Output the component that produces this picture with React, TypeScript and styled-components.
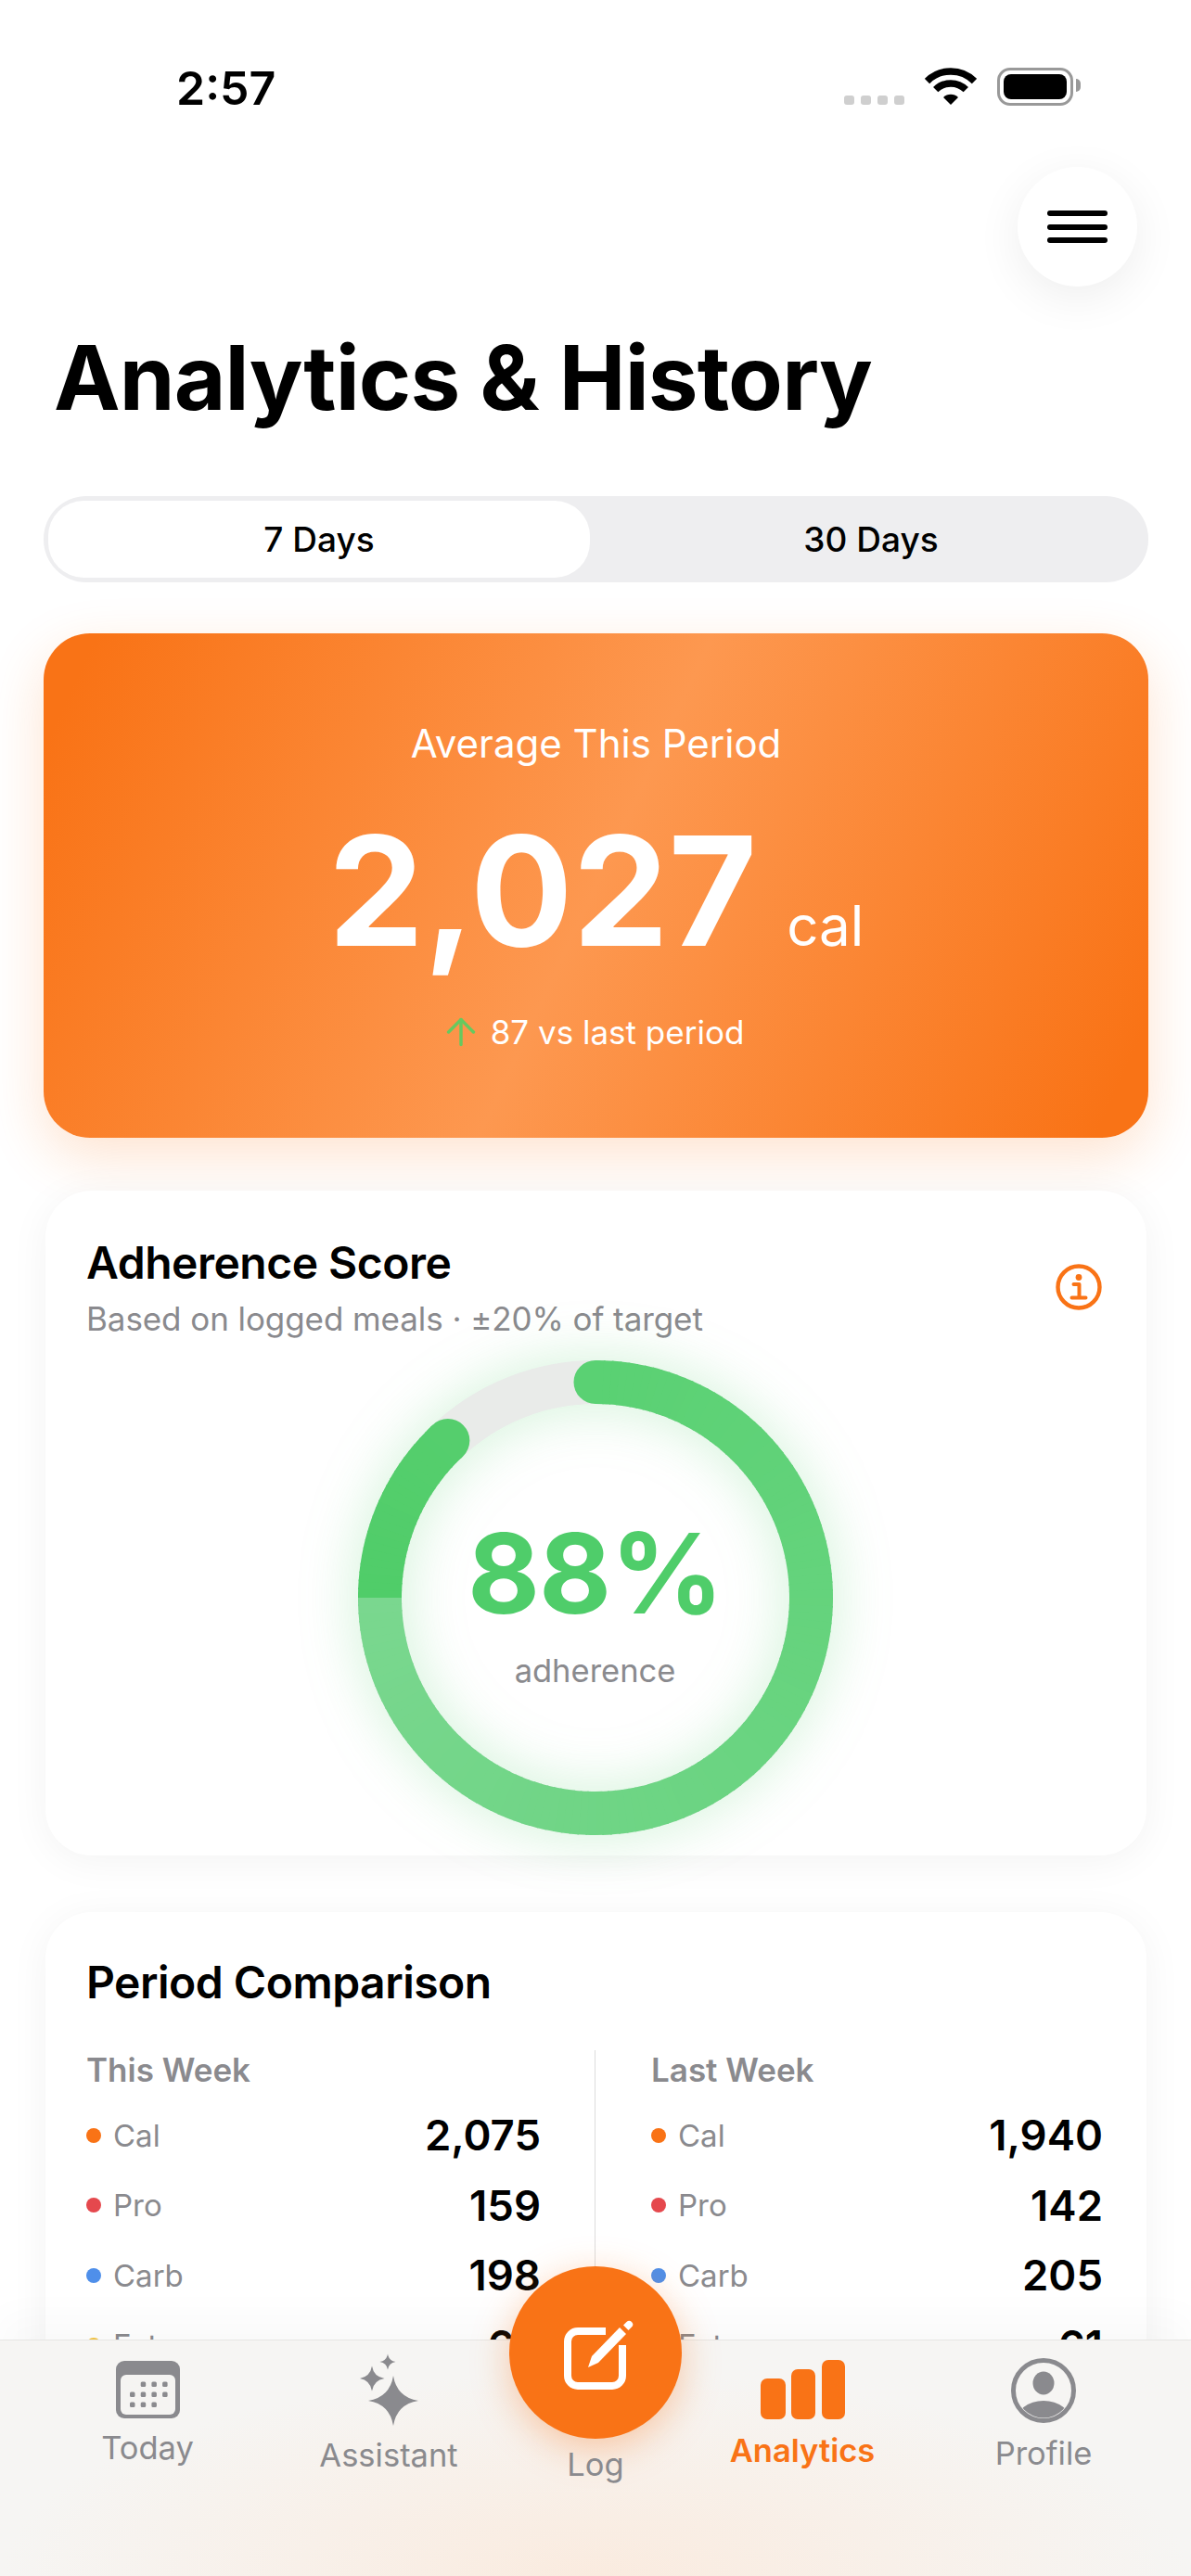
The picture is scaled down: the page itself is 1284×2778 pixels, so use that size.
import React, { FC } from "react";
import styled, { createGlobalStyle } from "styled-components";
import { ArrowUp } from "lucide-react";

const GlobalStyle = createGlobalStyle`
  html, body {
    margin: 0;
    padding: 0;
    background: #fff;
  }
  * {
    box-sizing: border-box;
  }
  body {
    font-family: Inter, "Liberation Sans", sans-serif;
    color: #000;
  }
`;

const ORANGE = "#f97316";
const GREY = "#8a8a8e";

const Page = styled.div`
  position: relative;
  width: 1284px;
  height: 2778px;
  overflow: hidden;
  background: #fff;
`;

const StatusBar = styled.div`
  display: flex;
  justify-content: space-between;
  align-items: flex-start;
  height: 180px;
  padding: 65px 127px 0 190px;
`;

const Time = styled.div`
  font-size: 50px;
  line-height: 60px;
  font-weight: 600;
`;

const StatusIcons = styled.div`
  display: flex;
  align-items: flex-start;
  padding-top: 8px;
`;

const SignalDots = styled.div`
  display: flex;
  gap: 7px;
  margin: 30px 22px 0 0;
`;

const SignalDot = styled.span`
  width: 11px;
  height: 10px;
  border-radius: 3px;
  background: #cfcfcf;
`;

const Battery = styled.div`
  position: relative;
  width: 82px;
  height: 41px;
  margin-left: 22px;
  padding: 4px;
  border: 3px solid #999;
  border-radius: 14px;

  &::before {
    content: "";
    display: block;
    height: 100%;
    border-radius: 8px;
    background: #000;
  }

  &::after {
    content: "";
    position: absolute;
    top: 9px;
    right: -11px;
    width: 5px;
    height: 14px;
    border-radius: 0 5px 5px 0;
    background: #999;
  }
`;

const Content = styled.div`
  padding: 0 46px 0 47px;
`;

const MenuRow = styled.div`
  display: flex;
  justify-content: flex-end;
  padding-right: 12px;
`;

const MenuButton = styled.div`
  display: flex;
  flex-direction: column;
  justify-content: center;
  align-items: center;
  gap: 8.5px;
  width: 129px;
  height: 129px;
  border-radius: 50%;
  background: #fff;
  box-shadow: 0 12px 50px rgba(0, 0, 0, 0.07);
`;

const MenuLine = styled.span`
  width: 65px;
  height: 6px;
  border-radius: 3px;
  background: #000;
`;

const Title = styled.h1`
  height: 186px;
  margin: 40px 0 0 11px;
  font-size: 96px;
  line-height: 116px;
  font-weight: 700;
  letter-spacing: -0.85px;
  white-space: nowrap;
`;

const Segmented = styled.div`
  display: grid;
  grid-template-columns: 584px 1fr;
  height: 93px;
  padding: 5px;
  border-radius: 46px;
  background: #eeeef0;
`;

const Segment = styled.div<{ $active?: boolean }>`
  display: flex;
  align-items: center;
  justify-content: center;
  padding-left: ${({ $active }) => ($active ? 0 : 9)}px;
  font-size: 37px;
  font-weight: 500;
  border-radius: 38px;
  background: ${({ $active }) => ($active ? "#fff" : "transparent")};
`;

const Hero = styled.section`
  display: flex;
  flex-direction: column;
  align-items: center;
  height: 544px;
  margin-top: 55px;
  padding-top: 94px;
  border-radius: 50px;
  color: #fff;
  background: linear-gradient(115deg, #f97316 4%, #fd9850 50%, #f97316 96%);
  box-shadow: 0 20px 60px rgba(249, 115, 22, 0.2);
`;

const HeroLabel = styled.div`
  font-size: 42px;
  line-height: 50px;
  font-weight: 400;
`;

const HeroValue = styled.div`
  display: flex;
  align-items: baseline;
  gap: 32px;
  margin-top: 49px;
`;

const HeroNumber = styled.span`
  font-size: 164px;
  line-height: 170px;
  font-weight: 700;
`;

const HeroUnit = styled.span`
  font-size: 60px;
  font-weight: 400;
`;

const HeroDelta = styled.div`
  display: flex;
  align-items: center;
  gap: 18px;
  margin-top: 44px;
  font-size: 35px;
  line-height: 46px;
  color: #fff;

  svg {
    color: #66c95f;
    margin: 0 -9px;
  }
`;

const Card = styled.section<{ $gap: number; $top: number }>`
  margin: ${({ $gap }) => $gap}px 2px 0;
  padding: ${({ $top }) => $top}px 47px 22px 44px;
  border-radius: 50px;
  background: #fff;
  box-shadow: 0 6px 44px rgba(0, 0, 0, 0.05);
`;

const CardHead = styled.div`
  display: flex;
  justify-content: space-between;
  align-items: center;
  padding-right: 1px;
`;

const CardTitle = styled.h2`
  margin: 0;
  font-size: 48px;
  line-height: 60px;
  font-weight: 600;
  letter-spacing: -0.5px;
`;

const CardSub = styled.div`
  margin-top: 8px;
  font-size: 35px;
  line-height: 44px;
  letter-spacing: -0.08px;
  color: ${GREY};
`;

const RingWrap = styled.div`
  display: grid;
  justify-content: center;
  margin: 23px 0 0 1px;

  & > * {
    grid-area: 1 / 1;
  }
`;

const RingSvg = styled.svg`
  display: block;
  overflow: visible;
  filter: drop-shadow(0 0 30px rgba(80, 205, 105, 0.28));
`;

const RingCenter = styled.div`
  display: flex;
  flex-direction: column;
  align-items: center;
  justify-content: center;
  padding-top: 10px;
`;

const RingValue = styled.div`
  font-size: 120px;
  line-height: 130px;
  font-weight: 700;
  letter-spacing: -1px;
  color: #4fcd6a;
`;

const RingLabel = styled.div`
  margin-top: 18px;
  font-size: 34.5px;
  line-height: 44px;
  color: ${GREY};
`;

const CompareGrid = styled.div`
  display: grid;
  grid-template-columns: 1fr 1fr;
  margin-top: 43px;
`;

const CompareCol = styled.div<{ $right?: boolean }>`
  padding: ${({ $right }) => ($right ? "0 0 0 60px" : "0 58px 0 0")};
  border-left: ${({ $right }) => ($right ? "1px solid #dcdcdc" : "none")};
`;

const ColTitle = styled.div`
  margin-bottom: 12px;
  font-size: 35px;
  line-height: 42px;
  font-weight: 600;
  color: ${GREY};
`;

const MacroRow = styled.div`
  display: flex;
  align-items: center;
  height: 75.5px;
`;

const MacroDot = styled.span<{ $color: string }>`
  width: 16px;
  height: 16px;
  margin-right: 13px;
  border-radius: 50%;
  background: ${({ $color }) => $color};
`;

const MacroName = styled.span`
  flex: 1;
  font-size: 33px;
  color: ${GREY};
`;

const MacroValue = styled.span`
  font-size: 45.5px;
  font-weight: 600;
`;

const TabBar = styled.nav`
  position: absolute;
  left: 0;
  right: 0;
  bottom: 0;
  display: grid;
  grid-template-columns: 318px 202px 244px 202px 318px;
  height: 255px;
  border-top: 1px solid #e6e6e4;
  background:
    radial-gradient(ellipse 640px 220px at 50% 100%, #faebdf 0%, rgba(250, 235, 223, 0) 100%),
    #f6f5f3;
  box-shadow: 0 -26px 40px rgba(0, 0, 0, 0.025);
`;

const TabItem = styled.div<{ $top: number; $gap: number; $active?: boolean }>`
  display: flex;
  flex-direction: column;
  align-items: center;
  padding-top: ${({ $top }) => $top}px;
  font-size: 34.5px;
  line-height: 40px;
  font-weight: ${({ $active }) => ($active ? 600 : 400)};
  color: ${({ $active }) => ($active ? ORANGE : GREY)};

  & > span {
    margin-top: ${({ $gap }) => $gap}px;
  }
`;

const Fab = styled.div`
  display: flex;
  align-items: center;
  justify-content: center;
  flex: none;
  width: 186px;
  height: 186px;
  margin-top: -80px;
  border-radius: 50%;
  background: ${ORANGE};
  box-shadow: 0 10px 40px rgba(249, 115, 22, 0.35);
`;

const WifiIcon: FC = () => (
  <svg width="56" height="40" viewBox="0 0 56 40">
    <g fill="none" stroke="#000" strokeWidth="7.5">
      <path d="M2.5 14.500a36 36 0 0 1 51 0" />
      <path d="M11.700 23.700a23 23 0 0 1 32.600 0" />
    </g>
    <path d="M20 32a11.500 11.500 0 0 1 16 0l-8 8z" fill="#000" />
  </svg>
);

const InfoIcon: FC = () => (
  <svg width="50" height="50" viewBox="0 0 50 50" fill="none">
    <circle cx="25" cy="25" r="22.5" stroke={ORANGE} strokeWidth="4.4" />
    <circle cx="25" cy="14.5" r="3.4" fill={ORANGE} />
    <path d="M19.500 22h6v14.500M17.500 36.500h15" stroke={ORANGE} strokeWidth="4" strokeLinecap="round" strokeLinejoin="round" />
  </svg>
);

const mix = (a: number[], b: number[], t: number) =>
  `rgb(${a.map((v, i) => Math.round(v + (b[i] - v) * t)).join(",")})`;

// the stroke colour steps back to the darker green at 9 o'clock, like a conic gradient seam
const ringColor = (deg: number) =>
  deg < 270
    ? mix([90, 209, 115], [122, 215, 143], deg / 270)
    : mix([80, 205, 105], [85, 206, 109], (deg - 270) / 47);

const Ring: FC = () => {
  const size = 512;
  const c = size / 2;
  const r = 232.5;
  const sweep = 316.8;
  const point = (deg: number) => {
    const a = (deg * Math.PI) / 180;
    return [c + r * Math.sin(a), c - r * Math.cos(a)];
  };
  const segments = [];
  for (let deg = 0; deg < sweep; deg += 2) {
    const [x1, y1] = point(deg);
    const end = deg + 2 >= 270 && deg < 270 ? 270 : Math.min(deg + 2.4, sweep);
    const [x2, y2] = point(end);
    segments.push(
      <path
        key={deg}
        d={`M${x1} ${y1}A${r} ${r} 0 0 1 ${x2} ${y2}`}
        stroke={ringColor(deg)}
      />
    );
  }
  const [endX, endY] = point(sweep);
  return (
    <RingSvg width={size} height={size} viewBox={`0 0 ${size} ${size}`} fill="none" strokeWidth="47">
      <circle cx={c} cy={c} r={r} stroke="#e9ebe9" />
      <circle cx={c} cy={c - r} r="23.5" fill={ringColor(0)} stroke="none" />
      <circle cx={endX} cy={endY} r="23.5" fill={ringColor(sweep)} stroke="none" />
      {segments}
    </RingSvg>
  );
};

const CalendarIcon: FC = () => {
  const rows = [
    [1, 2, 3],
    [0, 1, 2, 3],
    [0, 1, 2],
  ];
  return (
    <svg width="69" height="62" viewBox="0 0 69 62">
      <rect width="69" height="62" rx="9" fill={GREY} />
      <rect x="5" y="15" width="59" height="43" rx="6" fill="#f5f4f2" />
      {rows.map((row, y) =>
        row.map((x) => (
          <rect key={`${x}-${y}`} x={15 + x * 11.7} y={22.5 + y * 11} width="5.5" height="5.5" rx="1.5" fill={GREY} />
        ))
      )}
    </svg>
  );
};

const star = (cx: number, cy: number, r: number) => {
  const k = r * 0.14;
  return `M${cx} ${cy - r}Q${cx + k} ${cy - k} ${cx + r} ${cy}Q${cx + k} ${cy + k} ${cx} ${cy + r}Q${cx - k} ${cy + k} ${cx - r} ${cy}Q${cx - k} ${cy - k} ${cx} ${cy - r}Z`;
};

const SparkleIcon: FC = () => (
  <svg width="63" height="78" viewBox="0 0 63 78" fill={GREY}>
    <path d={star(36, 51, 27)} />
    <path d={star(13, 27, 13.5)} />
    <path d={star(30, 9, 8.5)} />
  </svg>
);

const ComposeIcon: FC = () => (
  <svg width="84" height="84" viewBox="0 0 84 84" fill="none">
    <path
      d="M53 19H23A11 11 0 0 0 12 30v37a11 11 0 0 0 11 11h37a11 11 0 0 0 11-11V34"
      stroke="#fff"
      strokeWidth="8"
    />
    <path d="M34 58l4-12L68 15l7 7-30 31z" fill="#fff" />
    <path d="M72 12.500l3.500-3.500a3.600 3.600 0 0 1 5.500 5.500l-3.500 3.500z" fill="#fff" />
  </svg>
);

const BarsIcon: FC = () => (
  <svg width="91" height="64" viewBox="0 0 91 64" fill={ORANGE}>
    <rect x="0" y="20" width="27" height="44" rx="7" />
    <rect x="33" y="10" width="26" height="54" rx="7" />
    <rect x="66" y="0" width="25" height="64" rx="7" />
  </svg>
);

const ProfileIcon: FC = () => (
  <svg width="70" height="70" viewBox="0 0 70 70" fill={GREY}>
    <defs>
      <clipPath id="profile-clip">
        <circle cx="35" cy="35" r="29.5" />
      </clipPath>
    </defs>
    <circle cx="35" cy="35" r="32.5" fill="none" stroke={GREY} strokeWidth="5" />
    <ellipse cx="35" cy="27" rx="11.5" ry="12.5" />
    <ellipse cx="35" cy="69" rx="30" ry="23" clipPath="url(#profile-clip)" />
  </svg>
);

type Macro = { name: string; color: string; value: string };

const MACRO_COLORS = ["#f97316", "#e5484d", "#4f8fea", "#f5c542"];
const MACRO_NAMES = ["Cal", "Pro", "Carb", "Fat"];

const thisWeek = ["2,075", "159", "198", "62"];
const lastWeek = ["1,940", "142", "205", "61"];

const toMacros = (values: string[]): Macro[] =>
  values.map((value, i) => ({ name: MACRO_NAMES[i], color: MACRO_COLORS[i], value }));

const Column: FC<{ title: string; values: string[]; right?: boolean }> = ({ title, values, right }) => (
  <CompareCol $right={right}>
    <ColTitle>{title}</ColTitle>
    {toMacros(values).map((m) => (
      <MacroRow key={m.name}>
        <MacroDot $color={m.color} />
        <MacroName>{m.name}</MacroName>
        <MacroValue>{m.value}</MacroValue>
      </MacroRow>
    ))}
  </CompareCol>
);

const App: FC = () => (
  <Page>
    <GlobalStyle />
    <StatusBar>
      <Time>2:57</Time>
      <StatusIcons>
        <SignalDots>
          <SignalDot />
          <SignalDot />
          <SignalDot />
          <SignalDot />
        </SignalDots>
        <WifiIcon />
        <Battery />
      </StatusIcons>
    </StatusBar>
    <Content>
      <MenuRow>
        <MenuButton>
          <MenuLine />
          <MenuLine />
          <MenuLine />
        </MenuButton>
      </MenuRow>
      <Title>Analytics &amp; History</Title>
      <Segmented>
        <Segment $active>7 Days</Segment>
        <Segment>30 Days</Segment>
      </Segmented>
      <Hero>
        <HeroLabel>Average This Period</HeroLabel>
        <HeroValue>
          <HeroNumber>2,027</HeroNumber>
          <HeroUnit>cal</HeroUnit>
        </HeroValue>
        <HeroDelta>
          <ArrowUp size={46} strokeWidth={1.8} />
          87 vs last period
        </HeroDelta>
      </Hero>
      <Card $gap={57} $top={48}>
        <CardHead>
          <div>
            <CardTitle>Adherence Score</CardTitle>
            <CardSub>Based on logged meals · ±20% of target</CardSub>
          </div>
          <InfoIcon />
        </CardHead>
        <RingWrap>
          <Ring />
          <RingCenter>
            <RingValue>88%</RingValue>
            <RingLabel>adherence</RingLabel>
          </RingCenter>
        </RingWrap>
      </Card>
      <Card $gap={61} $top={46}>
        <CardTitle>Period Comparison</CardTitle>
        <CompareGrid>
          <Column title="This Week" values={thisWeek} />
          <Column title="Last Week" values={lastWeek} right />
        </CompareGrid>
      </Card>
    </Content>
    <TabBar>
      <TabItem $top={22} $gap={12}>
        <CalendarIcon />
        <span>Today</span>
      </TabItem>
      <TabItem $top={14} $gap={12}>
        <SparkleIcon />
        <span>Assistant</span>
      </TabItem>
      <TabItem $top={0} $gap={8}>
        <Fab>
          <ComposeIcon />
        </Fab>
        <span>Log</span>
      </TabItem>
      <TabItem $top={21} $gap={14} $active>
        <BarsIcon />
        <span>Analytics</span>
      </TabItem>
      <TabItem $top={19} $gap={13}>
        <ProfileIcon />
        <span>Profile</span>
      </TabItem>
    </TabBar>
  </Page>
);

export default App;
